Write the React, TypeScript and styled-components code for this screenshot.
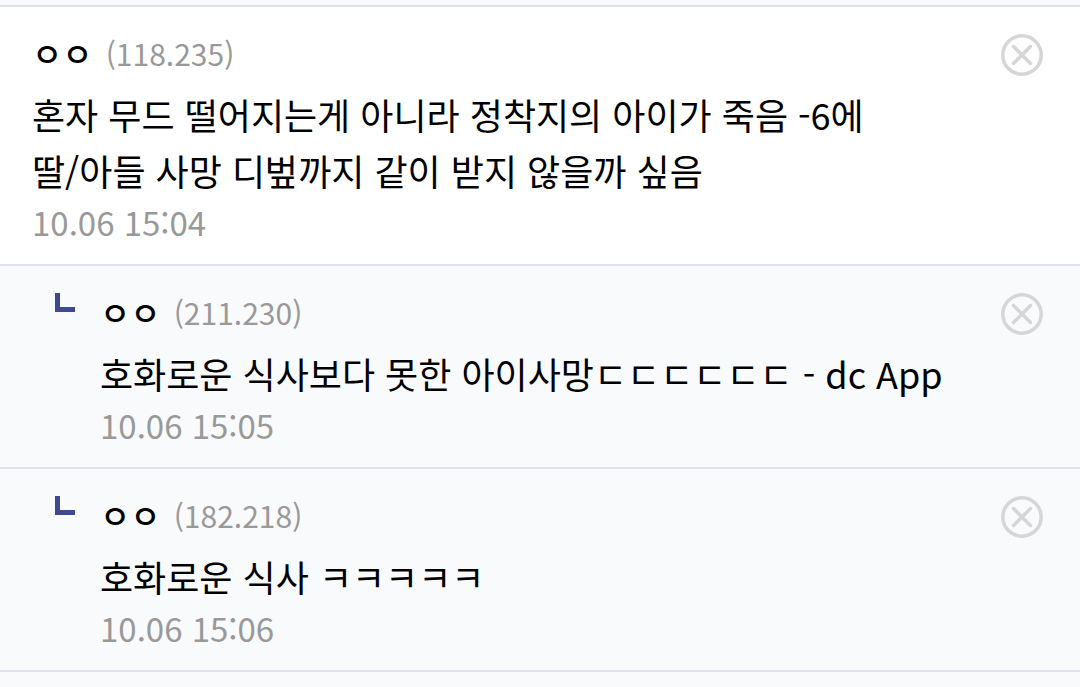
import React from 'react';
import styled, { createGlobalStyle } from 'styled-components';

const GlobalStyle = createGlobalStyle`
  * { box-sizing: border-box; }
  body {
    margin: 0;
    background: #f9fafc;
    color: #000;
    font-family: "Noto Sans CJK KR", sans-serif;
  }
`;

const List = styled.ul`
  list-style: none;
  margin: 0;
  padding: 5px 0 0;
`;

const Item = styled.li<{ $reply?: boolean }>`
  display: flex;
  align-items: flex-start;
  padding: 18px 36px 18px ${(p) => (p.$reply ? 54 : 32)}px;
  border-top: 2px solid #dfe1ee;
  background: ${(p) => (p.$reply ? '#f9fafc' : '#fff')};

  &:last-child {
    border-bottom: 2px solid #dfe1ee;
  }
`;

const ReplyMark = styled.svg`
  flex: none;
  width: 22px;
  height: 20px;
  margin: 9px 24px 0 0;
`;

const Body = styled.div`
  flex: 1;
  min-width: 0;
`;

const Author = styled.div`
  display: flex;
  align-items: center;
  gap: 13px;
  height: 56px;
`;

const Name = styled.span`
  font-size: 33px;
  font-weight: 500;
`;

const Address = styled.span`
  font-size: 30px;
  color: #999;
`;

const Message = styled.p`
  margin: 5px 0 0;
  font-size: 36px;
  line-height: 56px;
`;

const Time = styled.time`
  display: block;
  font-size: 33px;
  line-height: 48px;
  color: #999;
`;

const DeleteButton = styled.button`
  flex: none;
  width: 44px;
  height: 44px;
  margin-top: 8px;
  padding: 0;
  border: 0;
  background: none;

  svg {
    display: block;
  }
`;

type Comment = {
  name: string;
  address: string;
  lines: string[];
  time: string;
  reply?: boolean;
};

const comments: Comment[] = [
  {
    name: 'ㅇㅇ',
    address: '(118.235)',
    lines: ['혼자 무드 떨어지는게 아니라 정착지의 아이가 죽음 -6에', '딸/아들 사망 디벞까지 같이 받지 않을까 싶음'],
    time: '10.06 15:04',
  },
  { name: 'ㅇㅇ', address: '(211.230)', lines: ['호화로운 식사보다 못한 아이사망ㄷㄷㄷㄷㄷㄷ - dc App'], time: '10.06 15:05', reply: true },
  { name: 'ㅇㅇ', address: '(182.218)', lines: ['호화로운 식사 ㅋㅋㅋㅋㅋ'], time: '10.06 15:06', reply: true },
];

export default function App() {
  return (
    <>
      <GlobalStyle />
      <List lang="ko">
        {comments.map((c) => (
          <Item key={c.address} $reply={c.reply}>
            {c.reply && (
              <ReplyMark viewBox="0 0 22 20" aria-hidden="true">
                <path d="M1 0h5v14h15v5H1z" fill="#3f4991" />
              </ReplyMark>
            )}
            <Body>
              <Author>
                <Name>{c.name}</Name>
                <Address>{c.address}</Address>
              </Author>
              <Message>
                {c.lines.map((line, i) => (
                  <React.Fragment key={line}>
                    {i > 0 && <br />}
                    {line}
                  </React.Fragment>
                ))}
              </Message>
              <Time>{c.time}</Time>
            </Body>
            <DeleteButton type="button" aria-label="삭제">
              <svg width="44" height="44" viewBox="0 0 44 44" fill="none" stroke="#d5d6d8" strokeWidth="3.5" strokeLinecap="round">
                <circle cx="22" cy="22" r="19.2" />
                <path d="M13.5 13.5l17 17M30.5 13.5l-17 17" />
              </svg>
            </DeleteButton>
          </Item>
        ))}
      </List>
    </>
  );
}
